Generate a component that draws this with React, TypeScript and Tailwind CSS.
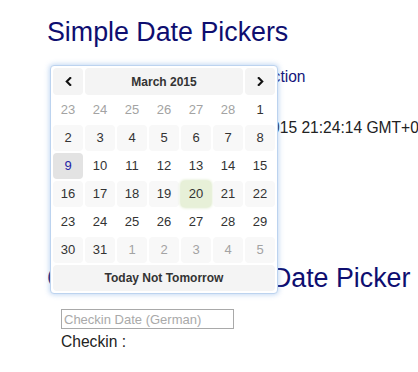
import React from "react";

type Day = { n: number; dim?: boolean };

const weeks: Day[][] = [
  [{ n: 23, dim: true }, { n: 24, dim: true }, { n: 25, dim: true }, { n: 26, dim: true }, { n: 27, dim: true }, { n: 28, dim: true }, { n: 1 }],
  [2, 3, 4, 5, 6, 7, 8].map((n) => ({ n })),
  [9, 10, 11, 12, 13, 14, 15].map((n) => ({ n })),
  [16, 17, 18, 19, 20, 21, 22].map((n) => ({ n })),
  [23, 24, 25, 26, 27, 28, 29].map((n) => ({ n })),
  [{ n: 30 }, { n: 31 }, { n: 1, dim: true }, { n: 2, dim: true }, { n: 3, dim: true }, { n: 4, dim: true }, { n: 5, dim: true }],
];

function Chevron({ dir }: { dir: "left" | "right" }) {
  return (
    <svg viewBox="0 0 8 10" className="h-[9px] w-[7px]" aria-hidden="true">
      <path
        d={dir === "left" ? "M6 1 L2 5 L6 9" : "M2 1 L6 5 L2 9"}
        fill="none"
        stroke="#111"
        strokeWidth="2.4"
        strokeLinecap="square"
        strokeLinejoin="miter"
      />
    </svg>
  );
}

function Picker() {
  return (
    <div className="absolute left-[50px] top-[65px] w-[228px] rounded-[4px] border border-[#bcd3ef] bg-white p-[2px] shadow-[0_0_5px_1px_rgba(125,170,228,0.45)]">
      <div className="grid grid-cols-[repeat(7,30px)] gap-[2px] text-[13px] text-[#333]">
        <div className="flex h-[27px] items-center justify-center rounded-[4px] bg-[#f4f4f4]">
          <Chevron dir="left" />
        </div>
        <div className="col-span-5 flex h-[27px] items-center justify-center rounded-[4px] bg-[#f4f4f4] text-[12px] font-bold text-[#333]">
          March 2015
        </div>
        <div className="flex h-[27px] items-center justify-center rounded-[4px] bg-[#f4f4f4]">
          <Chevron dir="right" />
        </div>

        {weeks.map((week, wi) =>
          week.map((d, di) => {
            let cls = "";
            if (wi === 2 && di === 0) cls = "bg-[#e3e3e3] text-[#1f1fa6]";
            else if (wi === 3 && di === 4) cls = "bg-[#e7f0d8] shadow-[0_0_3px_1px_#dce9c8]";
            else if (wi % 2 === 1) cls = "bg-[#f8f8f8]";
            return (
              <div
                key={`${wi}-${di}`}
                className={`flex h-[26px] items-center justify-center rounded-[4px] ${cls} ${d.dim ? "text-[#a3a3a3]" : ""}`}
              >
                {d.n}
              </div>
            );
          })
        )}

        <div className="col-span-7 flex h-[26px] items-center justify-center rounded-[4px] bg-[#f4f4f4] text-[12px] font-bold text-[#333]">
          Today Not Tomorrow
        </div>
      </div>
    </div>
  );
}

export default function App() {
  return (
    <div className="relative h-[372px] w-full overflow-hidden bg-white font-['Liberation_Sans',Arial,sans-serif]">
      <div className="pl-[47px] pt-[17px]">
        <h1 className="whitespace-nowrap text-[26.8px] leading-[31px] text-[#0e0e70]">Simple Date Pickers</h1>
        <div className="pl-[12px] text-[15.6px] leading-[18px]">
          <p className="mt-[20px] whitespace-nowrap text-[#15157a]">Default picker with today's selection</p>
          <p className="ml-[1.5px] mt-[33px] whitespace-nowrap text-[#222]">
            Current selection: Fri Mar 20 2015 21:24:14 GMT+0100 (CET)
          </p>
        </div>
        <h2 className="mt-[126px] whitespace-nowrap text-[26.8px] leading-[31px] text-[#0e0e70]">
          Checkin/Checkout Date Picker
        </h2>
        <div className="pl-[14px]">
          <input
            type="text"
            placeholder="Checkin Date (German)"
            className="mt-[15px] block h-[20px] w-[173px] border border-[#a9a9a9] px-[2px] text-[13px] text-[#333] outline-none placeholder:text-[#a9a9a9]"
          />
          <p className="mt-[4px] text-[15.6px] leading-[18px] text-[#222]">Checkin :</p>
        </div>
      </div>
      <Picker />
    </div>
  );
}
